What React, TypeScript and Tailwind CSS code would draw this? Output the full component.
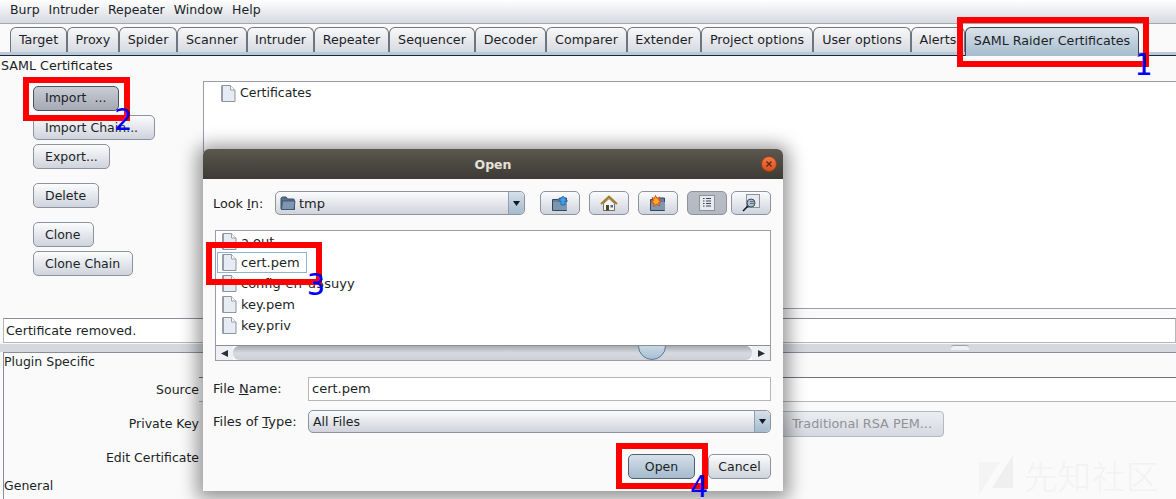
import React from "react";

function FileIcon({ className = "" }: { className?: string }) {
  return (
    <svg width="15" height="17" viewBox="0 0 15 17" className={className}>
      <path d="M1 0.5H9.5L14 5V16.5H1Z" fill="#e6ecf4" stroke="#8f939b" />
      <path d="M1 0.5V16.5" stroke="#8f939b" strokeWidth="1.6" />
      <path d="M9.5 0.5V5H14" fill="#f8fafc" stroke="#9da1a9" />
    </svg>
  );
}

function FolderIcon() {
  return (
    <svg width="16" height="15" viewBox="0 0 16 15">
      <path d="M1 2.5C1 1.5 2 1 3 1H6L7.5 3H13C14 3 14.5 3.5 14.5 4.5V13.5H2C1.4 13.5 1 13 1 12.5Z" fill="#54708e" stroke="#3c4c60" />
      <path d="M2.5 5H15L14 13.5H1.5Z" fill="#7d97b3" stroke="#3c4c60" strokeWidth="0.8" />
    </svg>
  );
}

function ToolFolder({ children }: { children?: React.ReactNode }) {
  return (
    <svg width="18" height="17" viewBox="0 0 18 17">
      <path d="M1.5 4.5H7L8.5 3H15.5V15.5H1.5Z" fill="#63809f" stroke="#34465c" />
      <path d="M2 7H16V15H2Z" fill="#7f96af" />
      {children}
    </svg>
  );
}

function Arrow() {
  return (
    <svg width="7" height="5" viewBox="0 0 7 5">
      <path d="M0 0H7L3.5 5Z" fill="#111827" />
    </svg>
  );
}

const tabs = [
  ["Target", "w-[57px]"],
  ["Proxy", "w-[52px]"],
  ["Spider", "w-[58px]"],
  ["Scanner", "w-[70px]"],
  ["Intruder", "w-[67px]"],
  ["Repeater", "w-[75px]"],
  ["Sequencer", "w-[86px]"],
  ["Decoder", "w-[71px]"],
  ["Comparer", "w-[81px]"],
  ["Extender", "w-[74px]"],
  ["Project options", "w-[112px]"],
  ["User options", "w-[98px]"],
  ["Alerts", "w-[54px]"],
];

function Btn({ children, className = "" }: { children: React.ReactNode; className?: string }) {
  return (
    <div className={`flex h-[25px] items-center rounded-[5px] border border-[#8d929c] bg-gradient-to-b from-[#fbfcfd] to-[#cfd3dc] pl-[11px] pt-[1px] text-[#1b1f26] ${className}`}>
      {children}
    </div>
  );
}

function ToolBtn({ children, className = "w-[40px]" }: { children: React.ReactNode; className?: string }) {
  return (
    <div className={`flex h-[24px] items-center justify-center rounded-[5px] border border-[#8d929c] bg-gradient-to-b from-[#fbfcfd] to-[#cfd3dc] ${className}`}>
      {children}
    </div>
  );
}

function RedBox({ className }: { className: string }) {
  return <div className={`pointer-events-none absolute border-[6px] border-[#fe0000] ${className}`} />;
}

function Num({ children, className }: { children: React.ReactNode; className: string }) {
  return (
    <div className={`absolute text-[30px] leading-[24px] text-[#0000f5] [font-family:'DejaVu_Sans_Mono',monospace] ${className}`}>
      {children}
    </div>
  );
}

export default function App() {
  return (
    <div className="relative flex h-[499px] w-[1176px] flex-col overflow-hidden bg-[#fafafa] text-[12.5px] text-[#1b1f26] [font-family:'DejaVu_Sans',sans-serif]">
      {/* menu bar */}
      <div className="flex h-[24px] shrink-0 items-center gap-[9px] border-b border-[#a6a8ad] bg-gradient-to-b from-[#ffffff] to-[#d6d9e0] pl-[10px] pb-[3px]">
        <span>Burp</span>
        <span>Intruder</span>
        <span>Repeater</span>
        <span>Window</span>
        <span>Help</span>
      </div>

      {/* tab strip */}
      <div className="h-[32px] shrink-0 border-b border-b-[#1f2733] bg-[#fafafa] text-[12.7px]">
        <div className="flex h-[31px] items-end border-b-[3px] border-[#b7cbdd] pl-[10px] pt-[3px]">
          {tabs.map(([t, w]) => (
            <div key={t} className={`flex h-[25px] shrink-0 items-center justify-center rounded-t-[6px] border border-b-0 border-[#70747c] bg-gradient-to-b from-[#f8f8fa] to-[#d7dae1] ${w}`}>
              {t}
            </div>
          ))}
          <div className="z-10 -mb-[4px] flex h-[29px] w-[174px] shrink-0 items-start justify-center rounded-t-[6px] border border-b-0 border-[#3a4452] bg-gradient-to-b from-[#dbe3ea] to-[#a5bbcf] pt-[3px]">
            SAML Raider Certificates
          </div>
        </div>
      </div>

      {/* upper area */}
      <div className="flex h-[262px] shrink-0 flex-col">
        <div className="flex h-[25px] shrink-0 items-center pl-[1px] pb-[5px] text-[12.7px]">SAML Certificates</div>
        <div className="flex flex-1">
          <div className="flex w-[203px] shrink-0 flex-col items-start pl-[33px] pt-[5px]">
            <Btn className="w-[86px] !border-[#4b515b] !from-[#c9cdd6] !to-[#a5a9b4] !pt-0">Import &nbsp;...</Btn>
            <Btn className="mt-[4px] w-[122px]">Import Chain...</Btn>
            <Btn className="mt-[4px] w-[77px]">Export...</Btn>
            <Btn className="mt-[14px] w-[66px]">Delete</Btn>
            <Btn className="mt-[14px] w-[61px]">Clone</Btn>
            <Btn className="mt-[4px] w-[100px]">Clone Chain</Btn>
          </div>
          <div className="mb-[9px] flex-1 border-b border-l border-t border-[#9a9ca3] bg-white pl-[17px] pt-[2px]">
            <div className="flex h-[18px] items-center gap-[4px]">
              <FileIcon />
              <span>Certificates</span>
            </div>
          </div>
        </div>
      </div>

      {/* status */}
      <div className="ml-[3px] flex h-[25px] shrink-0 items-center border border-[#b5b6ba] border-t-[#8a8d95] bg-white pl-[2px] text-[12.7px]">Certificate removed.</div>

      {/* splitter */}
      <div className="relative mt-[1px] h-[8px] shrink-0 bg-[#d5d8df]">
        <div className="absolute left-[951px] top-[1px] h-[5px] w-[18px] rounded-t-[3px] border-t border-[#9da1ab] bg-[#eef0f3]" />
      </div>

      {/* plugin panel */}
      <div className="ml-[3px] flex flex-1 border-l border-t border-[#8a8d95]">
        <div className="flex w-[195px] shrink-0 flex-col">
          <div className="h-[17px] leading-[17px]">Plugin Specific</div>
          <div className="mt-[11px] h-[17px] text-right leading-[17px]">Source</div>
          <div className="mt-[17px] h-[17px] text-right leading-[17px]">Private Key</div>
          <div className="mt-[17px] h-[17px] text-right leading-[17px]">Edit Certificate</div>
          <div className="mt-[11px] h-[17px] leading-[17px]">General</div>
        </div>
        <div className="flex flex-1 flex-col pt-[24px]">
          <div className="h-[25px] border-b border-t border-t-[#6f737b] border-b-[#b5b6ba] bg-white" />
          <div className="ml-[541px] mt-[9px] flex h-[26px] w-[204px] items-center justify-end rounded-[4px] border border-[#b4b8c1] bg-gradient-to-b from-[#eceef1] to-[#d5d8df] pr-[11px] text-[12.8px] text-[#8f9299]">
            Traditional RSA PEM...
          </div>
        </div>
      </div>

      {/* watermark */}
      <div className="absolute left-[978px] top-[455px] flex items-start gap-[10px] text-[#f2f2f2]">
        <svg width="36" height="41" viewBox="0 0 36 41">
          <path d="M1 7H22L1 40Z" fill="#f4f4f4" />
          <path d="M35 0V33H14Z" fill="#efefef" />
        </svg>
        <span className="mt-[4px] text-[33px] font-light leading-none tracking-[1px] [font-family:'Noto_Sans_CJK_SC',sans-serif]">先知社区</span>
      </div>

      {/* dialog */}
      <div className="absolute left-[203px] top-[149px] flex h-[342px] w-[580px] flex-col rounded-t-[6px] bg-[#fafafa] shadow-[0_2px_18px_6px_rgba(0,0,0,0.4)]">
        <div className="relative flex h-[30px] shrink-0 items-center justify-center rounded-t-[6px] bg-gradient-to-b from-[#5c584f] to-[#3d3b35] pt-[2px] font-bold text-[#e6e2da]">
          Open
          <div className="absolute right-[6px] top-[7px] flex h-[16px] w-[16px] items-center justify-center rounded-full border border-[#9b3d1c] bg-gradient-to-b from-[#f47a45] to-[#d94e1c]">
            <svg width="8" height="8" viewBox="0 0 8 8"><path d="M1.5 1.5L6.5 6.5M6.5 1.5L1.5 6.5" stroke="#5b2410" strokeWidth="1.2" /></svg>
          </div>
        </div>

        <div className="flex flex-1 flex-col pl-[10px] pr-[12px] pt-[12px]">
          {/* look in */}
          <div className="flex h-[24px] shrink-0 items-center">
            <span className="w-[62px] pt-[1px] text-[12.8px]">Look <span className="underline">I</span>n:</span>
            <div className="flex h-[24px] w-[250px] items-center rounded-[5px] border border-[#8d929c] bg-gradient-to-b from-[#fbfcfd] to-[#d0d3db] pl-[4px]">
              <FolderIcon />
              <span className="ml-[3px] flex-1 pt-[1px] text-[13px]">tmp</span>
              <div className="flex h-full w-[16px] items-center justify-center rounded-r-[5px] border-l border-[#8d9fb2] bg-gradient-to-b from-[#d6e0e9] to-[#a4bacd]">
                <Arrow />
              </div>
            </div>
            <ToolBtn className="ml-[15px] w-[40px]">
              <ToolFolder>
                <path d="M12 1L16.5 6H14V10H10V6H7.5Z" fill="#3f9fe8" stroke="#1b5f9c" strokeWidth="0.7" />
              </ToolFolder>
            </ToolBtn>
            <ToolBtn className="ml-[9px] w-[40px]">
              <svg width="18" height="17" viewBox="0 0 18 17">
                <path d="M1 9L9 1.5L17 9" fill="none" stroke="#a57c1e" strokeWidth="1.8" />
                <path d="M3.5 8.5V15.5H14.5V8.5L9 3.5Z" fill="#f6f4ec" stroke="#55503f" strokeWidth="0.8" />
                <rect x="6" y="10" width="3" height="5.5" fill="#4a4636" />
                <rect x="10.5" y="10" width="2.5" height="2.5" fill="#4b6d95" />
              </svg>
            </ToolBtn>
            <ToolBtn className="ml-[9px] w-[40px]">
              <ToolFolder>
                <path d="M6.5 0.5L8 3.5L11 2L9.5 5L12.5 6.5L9.5 7.5L10.5 11L7.5 9L5 11.5L5 8L1.5 7.5L4.5 5.5L3 2.5L5.5 3.5Z" fill="#f4b21f" stroke="#e3381d" strokeWidth="0.9" />
              </ToolFolder>
            </ToolBtn>
            <ToolBtn className="ml-[9px] w-[40px] !from-[#b9bdc6] !to-[#b4b8c1]">
              <svg width="16" height="16" viewBox="0 0 16 16">
                <rect x="0.5" y="0.5" width="15" height="15" fill="#e7ebf0" stroke="#8d929c" />
                <path d="M4 3.5H5.5M7 3.5H12M4 6H5.5M7 6H12M4 8.5H5.5M7 8.5H12M4 11H5.5M7 11H12" stroke="#36475a" />
              </svg>
            </ToolBtn>
            <ToolBtn className="ml-[4px] w-[40px]">
              <svg width="18" height="18" viewBox="0 0 18 18">
                <rect x="4.5" y="0.5" width="13" height="13" fill="#e7ebf0" stroke="#8d929c" />
                <circle cx="9" cy="9" r="4" fill="#a8c0d4" stroke="#3d4a58" />
                <path d="M6 12L1 17" stroke="#111827" strokeWidth="1.6" />
                <path d="M8 7.5H12M8 9.5H12" stroke="#3d4a58" strokeWidth="0.7" />
              </svg>
            </ToolBtn>
          </div>

          {/* file list */}
          <div className="ml-[2px] mt-[15px] flex h-[131px] shrink-0 flex-col border border-[#9a9ca6] bg-white">
            <div className="flex flex-1 flex-col">
              {[
                ["a.out", false],
                ["cert.pem", true],
                ["config-err-u5suyy", false],
                ["key.pem", false],
                ["key.priv", false],
              ].map(([name, sel]) => (
                <div
                  key={name as string}
                  className={`ml-[1px] flex h-[21px] items-center gap-[4px] border pl-[4px] text-[13px] ${sel ? "w-[90px] border-[#8fb3d3]" : "border-transparent"}`}
                >
                  <FileIcon />
                  <span>{name}</span>
                </div>
              ))}
            </div>
            <div className="relative flex h-[15px] shrink-0 overflow-hidden border-t border-[#8a8d95]">
              <div className="flex w-[17px] items-center justify-center bg-[#eef0f3]">
                <svg width="7" height="7" viewBox="0 0 7 7"><path d="M7 0V7L0 3.5Z" fill="#2b3038" /></svg>
              </div>
              <div className="flex-1 rounded-l-[6px] rounded-r-[6px] bg-gradient-to-b from-[#a8abb3] via-[#d8dae0] to-[#cdd0d7]" />
              <div className="flex w-[18px] items-center justify-center bg-[#eef0f3]">
                <svg width="7" height="7" viewBox="0 0 7 7"><path d="M0 0V7L7 3.5Z" fill="#2b3038" /></svg>
              </div>
              <div className="absolute left-[422px] -top-[14px] h-[28px] w-[28px] rounded-full border border-[#5d7891] bg-gradient-to-b from-[#e9eff4] to-[#a8c0d4]" />
            </div>
          </div>

          {/* file name */}
          <div className="mt-[16px] flex h-[24px] shrink-0 items-center">
            <span className="w-[95px] text-[13px]">File <span className="underline">N</span>ame:</span>
            <div className="flex h-[24px] flex-1 items-center border border-[#b5b6ba] bg-white pl-[3px] text-[13px]">cert.pem</div>
          </div>
          <div className="mt-[9px] flex h-[23px] shrink-0 items-center">
            <span className="w-[95px] pt-[1px] text-[13px]">Files of <span className="underline">T</span>ype:</span>
            <div className="flex h-[23px] flex-1 items-center rounded-[5px] border border-[#8d929c] bg-gradient-to-b from-[#fbfcfd] to-[#d0d3db] pl-[4px]">
              <span className="flex-1 pt-[1px]">All Files</span>
              <div className="flex h-full w-[16px] items-center justify-center rounded-r-[5px] border-l border-[#8d9fb2] bg-gradient-to-b from-[#d6e0e9] to-[#a4bacd]">
                <Arrow />
              </div>
            </div>
          </div>

          {/* actions */}
          <div className="mt-[21px] flex shrink-0 justify-end gap-[13px]">
            <Btn className="w-[67px] justify-center !pl-0 !border-[#4f5f70] !from-[#d6e0e9] !to-[#a4bacd]">Open</Btn>
            <Btn className="w-[63px] justify-center !pl-0">Cancel</Btn>
          </div>
        </div>
      </div>

      {/* annotations */}
      <RedBox className="left-[957px] top-[17px] h-[50px] w-[192px]" />
      <RedBox className="left-[23px] top-[77px] h-[44px] w-[107px]" />
      <RedBox className="left-[206px] top-[242px] h-[43px] w-[116px]" />
      <RedBox className="left-[616px] top-[443px] h-[46px] w-[92px]" />
      <Num className="left-[1134px] top-[53px]">1</Num>
      <Num className="left-[114px] top-[108px]">2</Num>
      <Num className="left-[307px] top-[273px]">3</Num>
      <Num className="left-[690px] top-[475px]">4</Num>
    </div>
  );
}
